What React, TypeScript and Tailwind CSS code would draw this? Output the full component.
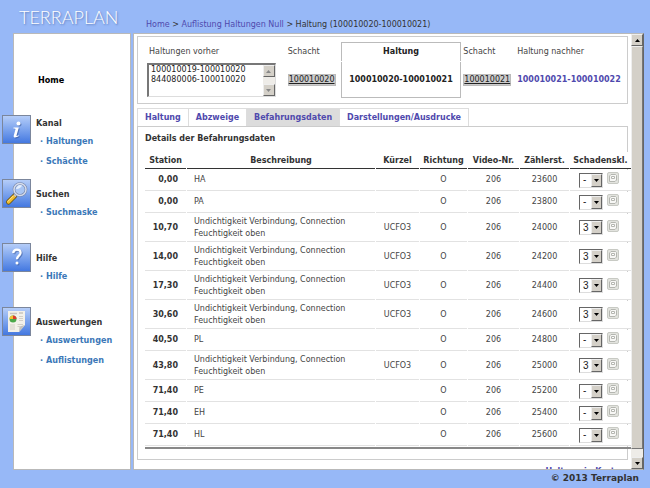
import type { ReactNode } from "react";
import clsx from "clsx";

type Row = {
  station: string;
  text: string;
  code?: string;
  counter: number;
  damage: string;
};

const LEAK = "Undichtigkeit Verbindung, Connection Feuchtigkeit oben";

const rows: Row[] = [
  { station: "0,00", text: "HA", counter: 23600, damage: "-" },
  { station: "0,00", text: "PA", counter: 23800, damage: "-" },
  { station: "10,70", text: LEAK, code: "UCFO3", counter: 24000, damage: "3" },
  { station: "14,00", text: LEAK, code: "UCFO3", counter: 24200, damage: "3" },
  { station: "17,30", text: LEAK, code: "UCFO3", counter: 24400, damage: "3" },
  { station: "30,60", text: LEAK, code: "UCFO3", counter: 24600, damage: "3" },
  { station: "40,50", text: "PL", counter: 24800, damage: "-" },
  { station: "43,80", text: LEAK, code: "UCFO3", counter: 25000, damage: "3" },
  { station: "71,40", text: "PE", counter: 25200, damage: "-" },
  { station: "71,40", text: "EH", counter: 25400, damage: "-" },
  { station: "71,40", text: "HL", counter: 25600, damage: "-" },
];

const columns = ["Station", "Beschreibung", "Kürzel", "Richtung", "Video-Nr.", "Zählerst.", "Schadenskl."];

const tabs = ["Haltung", "Abzweige", "Befahrungsdaten", "Darstellungen/Ausdrucke"];

function InfoIcon() {
  const stem = "M10.500 11.500h5.300l-2.300 8c-.2.8.6.7 2-.3l.4.6c-2 1.800-5.700 2.800-5.200 0l1.800-6.500c.2-.8-.6-.9-2-.9z";
  return (
    <svg viewBox="0 0 27 27" className="size-full">
      <g fill="#33508f" opacity="0.5" transform="translate(1 1)">
        <circle cx="15.500" cy="7.500" r="2" />
        <path d={stem} />
      </g>
      <g fill="#fff">
        <circle cx="15.500" cy="7.500" r="2" />
        <path d={stem} />
      </g>
    </svg>
  );
}

function SearchIcon() {
  return (
    <svg viewBox="0 0 27 27" className="size-full">
      <path d="M12 15.500 5.500 22" stroke="#6b5210" strokeWidth="5" strokeLinecap="round" />
      <path d="M11 16.500 5.500 22" stroke="#f0bd2c" strokeWidth="3.400" strokeLinecap="round" />
      <path d="M10 16.300 5 21.300" stroke="#ffe89a" strokeWidth="1" strokeLinecap="round" />
      <path d="M13.200 14.200 11.500 16" stroke="#c5c9d2" strokeWidth="3" />
      <circle cx="17" cy="9.500" r="6" fill="#a9c5f3" stroke="#7484a8" strokeWidth="2.600" />
      <circle cx="17" cy="9.500" r="6" fill="none" stroke="#d5dcec" strokeWidth="1.500" />
      <path d="M13 9a4 4 0 0 1 6-3.300c-1 2-3.500 3.600-6 3.300z" fill="#e4eefd" />
    </svg>
  );
}

function HelpIcon() {
  const mark = "M10.200 9.200c.2-2.300 1.700-3.600 3.700-3.600 2.200 0 3.700 1.200 3.700 3.200 0 2.800-3.600 3-3.600 6.400";
  return (
    <svg viewBox="0 0 27 27" className="size-full" fill="none">
      <g stroke="#33508f" opacity="0.5" transform="translate(1 1)">
        <path d={mark} strokeWidth="2.200" />
        <circle cx="14" cy="19" r="0.800" strokeWidth="1.400" />
      </g>
      <path d={mark} stroke="#fff" strokeWidth="2.200" />
      <circle cx="14" cy="19" r="1.500" fill="#fff" />
    </svg>
  );
}

function ReportIcon() {
  return (
    <svg viewBox="0 0 27 27" className="size-full">
      <path d="M5 3h17v14l-6 7H5z" fill="#f3f1ea" />
      <path d="M22 17l-6 7 .5-5.500z" fill="#c3c2be" />
      <path d="M7 5.500h7M16 5h4" stroke="#c9c5bd" strokeWidth="1.500" />
      <circle cx="10" cy="11" r="3.500" fill="#4ba84a" />
      <path d="M10 11V7.500A3.500 3.500 0 0 0 6.500 11z" fill="#f2c230" />
      <path d="M10 11V7.500A3.500 3.500 0 0 1 13.500 11z" fill="#df3b2c" />
      <path d="M16 8.500h4M16 10.500h4M16 12.500h4M7 17h5M7 19h5M7 21h5M14.500 16.500H20M14.500 18.500H17" stroke="#d3cfc7" />
    </svg>
  );
}

type NavSection = { title: string; icon: ReactNode; links: string[] };

const sections: NavSection[] = [
  { title: "Kanal", icon: <InfoIcon />, links: ["Haltungen", "Schächte"] },
  { title: "Suchen", icon: <SearchIcon />, links: ["Suchmaske"] },
  { title: "Hilfe", icon: <HelpIcon />, links: ["Hilfe"] },
  { title: "Auswertungen", icon: <ReportIcon />, links: ["Auswertungen", "Auflistungen"] },
];

function Sidebar() {
  return (
    <nav className="w-[118px] shrink-0 border border-[#b9b9b9] bg-white pt-10 font-['DejaVu_Sans_Condensed','DejaVu_Sans',sans-serif] text-[9px] font-bold text-[#333]">
      <a href="#home" className="ml-6 block h-[41px] leading-3 text-black">
        Home
      </a>
      {sections.map((section, i) => (
        <section key={section.title} className="-ml-3 flex min-h-16 gap-[5px]">
          <div className="size-[29px] shrink-0 border border-[#7b869c] bg-linear-to-b from-[#b5cdf8] to-[#4478e0]">
            {section.icon}
          </div>
          <div className={i === 0 ? "pt-0.5" : "pt-[9px]"}>
            <h2 className="leading-3">{section.title}</h2>
            <ul className="pt-0.5 pl-1 text-[#3b78b8]">
              {section.links.map((link) => (
                <li key={link} className="leading-5">
                  ·{" "}
                  <a href="#nav">{link}</a>
                </li>
              ))}
            </ul>
          </div>
        </section>
      ))}
    </nav>
  );
}

function ArrowButton({ up, label, muted }: { up?: boolean; label: string; muted?: boolean }) {
  return (
    <button
      aria-label={label}
      className="flex h-3 w-full shrink-0 items-center justify-center border border-t-[#eee] border-r-[#666] border-b-[#666] border-l-[#eee] bg-[#d4d0c8]"
    >
      <svg viewBox="0 0 5 3" className={clsx("h-[3px] w-[5px]", up && "rotate-180")}>
        <path d="M0 0h5L2.500 3z" fill={muted ? "#888" : "#000"} />
      </svg>
    </button>
  );
}

function ShaftButton({ children }: { children: ReactNode }) {
  return (
    <button className="h-3 border border-[#bbb] bg-[#ccc] leading-[10px] whitespace-nowrap text-[#222] underline">{children}</button>
  );
}

function RouteBox() {
  return (
    <div className="grid grid-cols-[141fr_53fr_121fr_56fr_110fr] grid-rows-[19px_36px] gap-y-px border border-[#ccc] py-[5px] pl-[9px]">
      <label htmlFor="previous" className="self-center pl-0.5">
        Haltungen vorher
      </label>
      <div className="self-center">Schacht</div>
      <div className="flex items-center justify-center border border-b-0 border-[#bbb] font-bold text-[#222]">Haltung</div>
      <div className="self-center pl-0.5">Schacht</div>
      <div className="self-center">Haltung nachher</div>

      <div className="mr-3 flex h-[34px] self-center border border-t-2 border-l-2 border-[#ddd] border-t-[#777] border-l-[#777]">
        <select id="previous" multiple size={2} className="min-w-0 flex-1 overflow-hidden text-[8px] text-[#222] outline-none">
          <option className="block h-[10px] min-h-0 p-0 pl-0.5 leading-[10px]">100010019-100010020</option>
          <option className="block h-[10px] min-h-0 p-0 pl-0.5 leading-[10px]">844080006-100010020</option>
        </select>
        <div className="flex w-3 flex-col justify-between bg-[#eeece8]">
          <ArrowButton up muted label="Liste nach oben" />
          <ArrowButton muted label="Liste nach unten" />
        </div>
      </div>
      <div className="flex items-center">
        <ShaftButton>100010020</ShaftButton>
      </div>
      <div className="flex items-center justify-center border border-t-0 border-[#bbb] font-bold text-[#222]">
        100010020-100010021
      </div>
      <div className="flex items-center pl-0.5">
        <ShaftButton>100010021</ShaftButton>
      </div>
      <a href="#next" className="self-center font-bold whitespace-nowrap text-[#4f49ad]">
        100010021-100010022
      </a>
    </div>
  );
}

function DamageCell({ value, label }: { value: string; label: string }) {
  return (
    <div className="flex items-center gap-1 pl-[9px]">
      <div className="relative">
        <select
          aria-label={label}
          defaultValue={value}
          className="block h-[15px] w-6 appearance-none border border-[#ddd] border-t-[#666] border-l-[#666] bg-white pl-[3px] font-[Liberation_Sans] text-[10px] leading-3 text-[#222]"
        >
          <option>-</option>
          <option>3</option>
        </select>
        <span className="pointer-events-none absolute inset-y-px right-px flex w-[11px] items-center justify-center border border-[#eee] border-r-[#666] border-b-[#666] bg-[#d4d0c8]">
          <svg viewBox="0 0 5 3" className="h-[3px] w-[5px]">
            <path d="M0 0h5L2.500 3z" fill="#000" />
          </svg>
        </span>
      </div>
      <button aria-label="Speichern" className="mb-1 size-3 rounded-xs border border-[#c8cac4] bg-[#e2e3de]">
        <svg viewBox="0 0 10 10" className="size-full" fill="none" stroke="#b4b6b0">
          <path d="M1.500 3 3 1.500h4.500l1 1V7L7 8.500H1.500z" fill="#f7f7f5" />
          <path d="M3.500 3.500h3v2h-3z" fill="#fff" />
        </svg>
      </button>
    </div>
  );
}

function DetailsTable() {
  return (
    <div className="relative mr-[-4px] border-b-2 border-[#888]">
      <table className="-ml-px w-[calc(100%+2px)] table-fixed border-separate border-spacing-px">
        <colgroup>
          <col className="w-[41px]" />
          <col />
          <col className="w-[43px]" />
          <col className="w-[47px]" />
          <col className="w-[51px]" />
          <col className="w-[49px]" />
          <col className="w-[61px]" />
        </colgroup>
        <thead>
          <tr className="h-[17px]">
            {columns.map((name) => (
              <th key={name} className="border-b border-[#333] bg-white p-0 text-center leading-[15px] whitespace-nowrap text-[#333]">
                {name}
              </th>
            ))}
          </tr>
        </thead>
        <tbody>
          {rows.map((row) => (
            <tr
              key={row.counter}
              className={clsx(
                "text-center leading-3 *:border-b *:border-[#e2e2e2] *:bg-white *:p-0",
                row.code ? "h-7" : "h-[21px]"
              )}
            >
              <th className="text-[#333]">
                <div className="pr-2 text-right">{row.station}</div>
              </th>
              <td className="text-left">
                <div className="max-w-44 pl-[7px]">{row.text}</div>
              </td>
              <td>{row.code}</td>
              <td>O</td>
              <td>206</td>
              <td>{row.counter}</td>
              <td>
                <DamageCell value={row.damage} label={`Schadensklasse ${row.counter}`} />
              </td>
            </tr>
          ))}
        </tbody>
      </table>
    </div>
  );
}

export default function App() {
  return (
    <div className="flex h-dvh flex-col overflow-hidden bg-[#97b8f7] pl-[13px] font-[DejaVu_Sans,Verdana,sans-serif] text-[8px] text-[#444]">
      <header className="flex h-[33px] shrink-0 items-end">
        <h1 className="w-[133px] shrink-0 pl-1.5 font-[Lato] text-[18px] leading-8 font-light text-white [text-shadow:1px_1px_2px_#5f7cb8]">
          TERRAPLAN
        </h1>
        <p className="leading-4 text-[#4f49ad]">
          <a href="#home">Home</a> <span className="text-[#333]">&gt;</span> <a href="#list">Auflistung Haltungen Null</a>{" "}
          <span className="text-[#333]">&gt; Haltung (100010020-100010021)</span>
        </p>
      </header>

      <div className="flex min-h-0 flex-1 gap-0.5 pr-1.5">
        <Sidebar />
        <main className="flex min-w-0 flex-1 overflow-hidden border border-[#b9b9b9] border-r-[#666] bg-white">
          <div className="min-w-0 flex-1 pt-0.5 pr-[3px] pl-[3px]">
            <RouteBox />
            <div className="mt-1 flex font-bold">
              {tabs.map((tab) => (
                <button
                  key={tab}
                  className={clsx(
                    "h-[18px] border border-b-0 border-[#ddd] px-[7px] text-[#4f49ad] not-first:border-l-0",
                    tab === "Befahrungsdaten" && "bg-[#dcdcdc]"
                  )}
                >
                  {tab}
                </button>
              ))}
            </div>
            <section className="border border-[#ccc] pb-[10px] pl-[7px]">
              <h2 className="pt-1.5 leading-3 font-bold text-[#333]">
                Details der Befahrungsdaten
              </h2>
              <div className="pt-1.5">
                <DetailsTable />
              </div>
            </section>
            <div className="pt-1.5 pr-2 text-right leading-3 font-bold text-[#4f49ad]">
              <a href="#map">Haltung in Karte</a>
            </div>
          </div>
          <div className="flex w-3 shrink-0 flex-col bg-[#eeece8]">
            <ArrowButton up label="Nach oben" />
            <div className="flex-1 border border-[#eee] border-r-[#777] border-b-[#777] bg-[#d4d0c8]" />
            <div className="h-2" />
            <ArrowButton label="Nach unten" />
          </div>
        </main>
      </div>

      <footer className="h-[18px] shrink-0 pr-[11px] text-right text-[9px] leading-4 font-bold text-[#333]">
        © 2013 Terraplan
      </footer>
    </div>
  );
}
